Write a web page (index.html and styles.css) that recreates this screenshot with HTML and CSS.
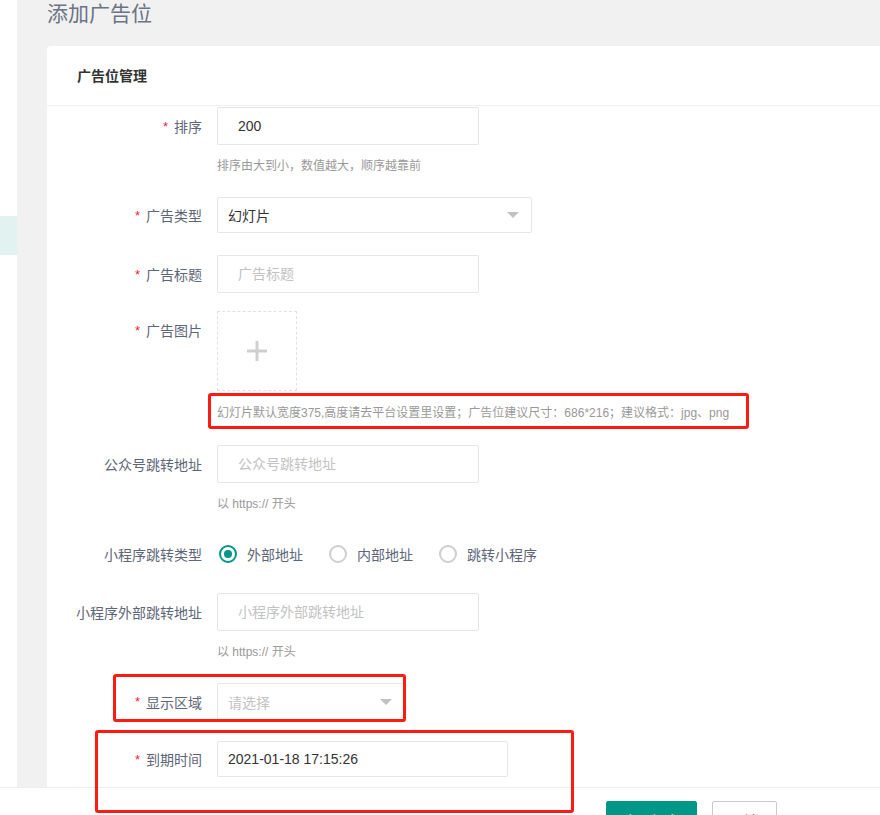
FILE: index.html
```html
<!DOCTYPE html>
<html lang="zh">
<head>
<meta charset="utf-8">
<title>添加广告位</title>
<link rel="stylesheet" href="styles.css">
</head>
<body>
<div class="layout">
  <aside class="sidebar"><div class="side-active"></div></aside>
  <main class="main">
    <h1 class="page-title">添加广告位</h1>
    <section class="card">
      <div class="card-header">广告位管理</div>
      <form class="card-body">
        <div class="form-item item-1">
          <label class="form-label"><span class="req">*</span>排序</label>
          <div class="field">
            <input class="input w-262 pad-20" value="200">
            <div class="help help-9">排序由大到小，数值越大，顺序越靠前</div>
          </div>
        </div>

        <div class="form-item item-2 h-36">
          <label class="form-label"><span class="req">*</span>广告类型</label>
          <div class="field">
            <div class="select w-315 h-36"><span class="select-text">幻灯片</span><i class="arrow"></i></div>
          </div>
        </div>

        <div class="form-item item-3">
          <label class="form-label"><span class="req">*</span>广告标题</label>
          <div class="field">
            <input class="input w-262 pad-20" placeholder="广告标题">
          </div>
        </div>

        <div class="form-item item-4">
          <label class="form-label"><span class="req">*</span>广告图片</label>
          <div class="field">
            <div class="upload">
              <svg width="22" height="22" viewBox="0 0 22 22"><path d="M11 1V21M1 11H21" stroke="#cfcfcf" stroke-width="3" fill="none"/></svg>
            </div>
            <div class="help help-10">幻灯片默认宽度375,高度请去平台设置里设置；广告位建议尺寸：686*216；建议格式：jpg、png</div>
          </div>
        </div>

        <div class="form-item item-5">
          <label class="form-label">公众号跳转地址</label>
          <div class="field">
            <input class="input w-262 pad-20" placeholder="公众号跳转地址">
            <div class="help help-9">以 https:// 开头</div>
          </div>
        </div>

        <div class="form-item item-6">
          <label class="form-label">小程序跳转类型</label>
          <div class="field radios">
            <span class="radio checked"><i class="radio-dot"></i>外部地址</span>
            <span class="radio"><i class="radio-dot"></i>内部地址</span>
            <span class="radio"><i class="radio-dot"></i>跳转小程序</span>
          </div>
        </div>

        <div class="form-item item-7">
          <label class="form-label">小程序外部跳转地址</label>
          <div class="field">
            <input class="input w-262 pad-20" placeholder="小程序外部跳转地址">
            <div class="help help-9">以 https:// 开头</div>
          </div>
        </div>

        <div class="form-item item-8 h-37">
          <label class="form-label"><span class="req">*</span>显示区域</label>
          <div class="field">
            <div class="select w-188 h-37"><span class="select-text placeholder">请选择</span><i class="arrow"></i></div>
          </div>
        </div>

        <div class="form-item item-9 h-36">
          <label class="form-label"><span class="req">*</span>到期时间</label>
          <div class="field">
            <input class="input w-291 h-36 pad-10" value="2021-01-18 17:15:26">
          </div>
        </div>
      </form>
    </section>
  </main>
</div>

<footer class="footer">
  <button class="btn btn-primary" type="button">立即提交</button>
  <button class="btn btn-default" type="button">取消</button>
</footer>

<div class="mark mark-1"></div>
<div class="mark mark-2"></div>
<div class="mark mark-3"></div>
</body>
</html>
```

FILE: styles.css
```css
* { box-sizing: border-box; }

html, body {
  margin: 0;
  padding: 0;
  height: 100%;
  overflow: hidden;
}

body {
  position: relative;
  font-family: "Liberation Sans", "Noto Sans CJK SC", sans-serif;
  font-size: 14px;
  color: #333;
  background: #fff;
}

.layout {
  display: flex;
  min-height: 100vh;
}

.sidebar {
  width: 17px;
  flex-shrink: 0;
  background: #fff;
}

.side-active {
  margin-top: 216px;
  height: 39px;
  background: #e1f2f0;
}

.main {
  flex: 1;
  background: #f1f1f1;
  padding-left: 30px;
  min-width: 0;
}

.page-title {
  margin: 0;
  height: 28px;
  font-size: 21px;
  line-height: 28px;
  font-weight: normal;
  color: #6b7385;
}

.card {
  margin-top: 18px;
  background: #fff;
  border-radius: 4px 0 0 0;
  min-height: 760px;
}

.card-header {
  height: 60px;
  line-height: 60px;
  padding-left: 30px;
  font-size: 14px;
  font-weight: bold;
  color: #333;
  border-bottom: 1px solid #f0f0f0;
}

.card-body {
  display: flex;
  flex-direction: column;
  margin: 0;
}

.form-item {
  display: flex;
  align-items: flex-start;
}

.item-1 { margin-top: 1px; }
.item-2 { margin-top: 23px; }
.item-3 { margin-top: 22px; }
.item-4 { margin-top: 18px; }
.item-5 { margin-top: 24px; }
.item-6 { margin-top: 23px; }
.item-7 { margin-top: 20px; }
.item-8 { margin-top: 23px; }
.item-9 { margin-top: 21px; }

.form-label {
  width: 155px;
  height: 38px;
  flex-shrink: 0;
  margin-right: 15px;
  display: flex;
  align-items: center;
  justify-content: flex-end;
  white-space: nowrap;
  color: #5d6578;
  font-size: 14px;
}

.h-36 .form-label { height: 36px; }
.h-37 .form-label { height: 37px; }

.req {
  color: #f5222d;
  margin-right: 6px;
  font-size: 13px;
}

.field {
  display: flex;
  flex-direction: column;
  align-items: flex-start;
}

.input {
  height: 38px;
  border: 1px solid #e6e6e6;
  border-radius: 2px;
  font: inherit;
  font-size: 14px;
  color: #333;
  background: #fff;
  outline: none;
  margin: 0;
}

.input::placeholder { color: #c2c2c2; }

.pad-20 { padding: 0 10px 0 20px; }
.pad-10 { padding: 0 10px; }

.w-262 { width: 262px; }
.w-315 { width: 315px; }
.w-291 { width: 291px; }
.w-188 { width: 188px; }
.input.h-36 { height: 36px; }

.select {
  position: relative;
  height: 38px;
  border: 1px solid #e6e6e6;
  border-radius: 2px;
  padding: 0 10px;
  display: flex;
  align-items: center;
  color: #333;
}

.select.h-36 { height: 36px; }
.select.h-37 { height: 37px; }

.select-text.placeholder { color: #c2c2c2; }

.arrow {
  position: absolute;
  right: 12px;
  top: 50%;
  margin-top: -3px;
  width: 0;
  height: 0;
  border-left: 6px solid transparent;
  border-right: 6px solid transparent;
  border-top: 6px solid #c2c2c2;
}

.help {
  height: 20px;
  display: flex;
  align-items: center;
  white-space: nowrap;
  font-size: 12px;
  color: #999;
}

.help-9 { margin-top: 9px; }
.help-10 { margin-top: 10px; }

.upload {
  width: 80px;
  height: 80px;
  border: 1px dashed #e2e2e2;
  display: flex;
  align-items: center;
  justify-content: center;
}

.radios {
  flex-direction: row;
  align-items: center;
  height: 38px;
  padding-left: 2px;
}

.radio {
  display: inline-flex;
  align-items: center;
  color: #5d6578;
  margin-right: 26px;
}

.radio-dot {
  width: 18px;
  height: 18px;
  border: 2px solid #cfcfcf;
  border-radius: 50%;
  margin-right: 10px;
  display: inline-flex;
  align-items: center;
  justify-content: center;
}

.radio.checked .radio-dot { border-color: #009688; }

.radio.checked .radio-dot::after {
  content: "";
  width: 8px;
  height: 8px;
  border-radius: 50%;
  background: #009688;
}

.footer {
  position: fixed;
  left: 0;
  right: 0;
  top: 787px;
  height: 70px;
  background: #fff;
  border-top: 1px solid #eeeeee;
  padding: 13px 0 0 606px;
  display: flex;
  align-items: flex-start;
  gap: 15px;
}

.btn {
  height: 38px;
  flex-shrink: 0;
  display: inline-flex;
  align-items: center;
  justify-content: center;
  padding: 0;
  font: inherit;
  font-size: 14px;
  border-radius: 2px;
  cursor: pointer;
}

.btn-primary {
  width: 91px;
  background: #009688;
  border: 1px solid #009688;
  color: #fff;
}

.btn-default {
  width: 65px;
  background: #fff;
  border: 1px solid #c9c9c9;
  color: #555;
}

.mark {
  position: absolute;
  border: 3px solid #ff1a12;
  border-radius: 3px;
  pointer-events: none;
}

.mark-1 { left: 208px; top: 393px; width: 541px; height: 36px; }
.mark-2 { left: 113px; top: 674px; width: 293px; height: 48px; }
.mark-3 { left: 95px; top: 730px; width: 479px; height: 83px; }
```
